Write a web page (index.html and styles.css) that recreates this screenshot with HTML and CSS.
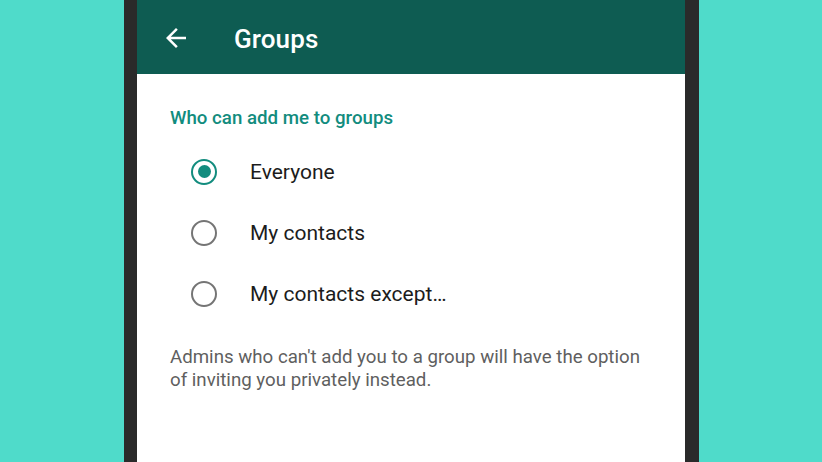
FILE: index.html
```html
<!DOCTYPE html>
<html>
<head>
<meta charset="utf-8">
<link rel="stylesheet" href="styles.css">
</head>
<body>
<div class="stage">
  <div class="phone">
    <header class="appbar">
      <svg class="back" width="24" height="24" viewBox="0 0 24 24"><path d="M20 11H7.83l5.59-5.59L12 4l-8 8 8 8 1.41-1.41L7.83 13H20v-2z" fill="#fff"/></svg>
      <h1 class="title">Groups</h1>
    </header>
    <main class="content">
      <h2 class="section">Who can add me to groups</h2>
      <ul class="options">
        <li class="option"><span class="radio checked"></span><span class="label">Everyone</span></li>
        <li class="option"><span class="radio"></span><span class="label">My contacts</span></li>
        <li class="option"><span class="radio"></span><span class="label">My contacts except…</span></li>
      </ul>
      <p class="note">Admins who can't add you to a group will have the option of inviting you privately instead.</p>
    </main>
  </div>
</div>
</body>
</html>
```
FILE: styles.css
```css
html, body {
  margin: 0;
  padding: 0;
  height: 100%;
}
body {
  background: #4fdbca;
  font-family: Roboto, "Noto Sans", sans-serif;
  overflow: hidden;
}
.stage {
  display: flex;
  justify-content: center;
  height: 462px;
}
.phone {
  width: 548px;
  margin-left: 1px;
  border-left: 13px solid #2a2a2a;
  border-right: 14px solid #2a2a2a;
  background: #fff;
  display: flex;
  flex-direction: column;
}
.appbar {
  height: 74px;
  background: #0e5c52;
  display: flex;
  align-items: center;
  padding-left: 24px;
  box-sizing: border-box;
}
.back {
  width: 30px;
  height: 30px;
  margin-top: 2px;
}
.title {
  margin: 4px 0 0 43px;
  color: #fff;
  font-weight: 500;
  font-size: 26px;
  letter-spacing: 0.1px;
}
.content {
  padding: 32px 33px 0 33px;
}
.section {
  margin: 0;
  color: #128c7e;
  font-weight: 500;
  font-size: 18.7px;
  line-height: 24px;
}
.options {
  list-style: none;
  margin: 11px 0 0 0;
  padding: 0;
}
.option {
  display: flex;
  align-items: center;
  height: 61px;
}
.radio {
  width: 26px;
  height: 26px;
  box-sizing: border-box;
  border: 2.5px solid #757575;
  border-radius: 50%;
  margin-left: 21px;
  display: flex;
  align-items: center;
  justify-content: center;
}
.radio.checked {
  border-color: #128c7e;
}
.radio.checked::after {
  content: "";
  width: 13px;
  height: 13px;
  border-radius: 50%;
  background: #128c7e;
}
.label {
  margin-left: 33px;
  font-size: 21px;
  color: #1c1c1c;
}
.note {
  margin: 22px 0 0 0;
  color: #5f5f5f;
  font-size: 18.7px;
  line-height: 23px;
}
```
